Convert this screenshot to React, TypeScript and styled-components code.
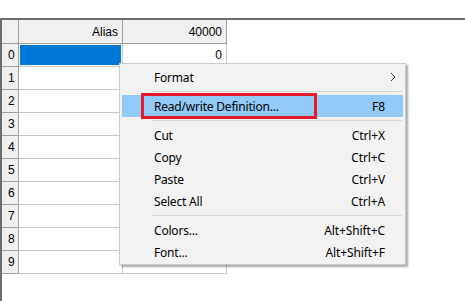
import { Fragment } from "react";
import styled, { createGlobalStyle } from "styled-components";

const GlobalStyle = createGlobalStyle`
  html, body {
    margin: 0;
    padding: 0;
    background: #ffffff;
    width: 465px;
    height: 301px;
    overflow: hidden;
  }
  body {
    font-family: "Noto Sans", "Liberation Sans", Arial, sans-serif;
    font-size: 12px;
    color: #000000;
  }
`;

const Frame = styled.div`
  position: relative;
  margin-top: 18px;
  height: 283px;
  border-top: 2px solid #6e6e6e;
  border-left: 2px solid #6e6e6e;
  box-sizing: border-box;
  background: #ffffff;
`;

const Grid = styled.div`
  display: grid;
  grid-template-columns: 17px 104px 104px;
  grid-auto-rows: 23px;
  grid-template-rows: 24px;
  font-family: "Liberation Sans", Arial, sans-serif;
  font-size: 12px;
`;

const Cell = styled.div<{ $head?: boolean; $align?: string }>`
  box-sizing: border-box;
  display: flex;
  align-items: center;
  justify-content: ${({ $align }) => $align || "flex-end"};
  padding: ${({ $align }) => ($align === "flex-start" ? "0 0 0 6px" : "0 4px 0 0")};
  background: ${({ $head }) => ($head ? "#f0f0f0" : "#ffffff")};
  border-right: 1px solid ${({ $head }) => ($head ? "#a0a0a0" : "#c8c8c8")};
  border-bottom: 1px solid ${({ $head }) => ($head ? "#a0a0a0" : "#c8c8c8")};
  position: relative;
`;

const Selection = styled.div`
  position: absolute;
  inset: 1px;
  background: #0078d7;
`;

const Menu = styled.div`
  position: absolute;
  left: 117px;
  top: 43px;
  width: 287px;
  box-sizing: border-box;
  padding: 2px 1px 1px 1px;
  background: #f2f2f2;
  border: 1px solid #cccccc;
  box-shadow: 2px 2px 2px rgba(0, 0, 0, 0.35);
  font-family: "Noto Sans", "Liberation Sans", Arial, sans-serif;
  font-size: 12px;
`;

const Item = styled.div<{ $active?: boolean }>`
  display: flex;
  align-items: center;
  justify-content: space-between;
  height: 22px;
  margin: 0 1px;
  padding: 0 18px 0 32px;
  background: ${({ $active }) => ($active ? "#91c9f7" : "transparent")};
  white-space: nowrap;
`;

const Label = styled.span`
  letter-spacing: -0.2px;
`;

const Shortcut = styled.span`
  letter-spacing: -0.1px;
`;

const Arrow = styled.svg`
  margin-right: -11px;
`;

const Separator = styled.div`
  height: 7px;
  display: flex;
  align-items: center;
  padding-left: 30px;
  margin-right: 2px;
  &::after {
    content: "";
    flex: 1;
    height: 1px;
    background: #d7d7d7;
  }
`;

const Callout = styled.div`
  position: absolute;
  left: 21px;
  top: 29px;
  width: 176px;
  height: 26px;
  box-sizing: border-box;
  border: 3px solid #e5192a;
`;

const rows = Array.from({ length: 10 }, (_, i) => i);

export default function App() {
  return (
    <>
      <GlobalStyle />
      <Frame>
        <Grid>
          <Cell $head />
          <Cell $head>Alias</Cell>
          <Cell $head>40000</Cell>
          {rows.map((r) => (
            <Fragment key={r}>
              <Cell $head $align="flex-start">
                {r}
              </Cell>
              <Cell>{r === 0 && <Selection />}</Cell>
              <Cell>{r === 0 ? "0" : ""}</Cell>
            </Fragment>
          ))}
        </Grid>
        <Menu>
          <Item>
            <Label>Format</Label>
            <Arrow width="6" height="10" viewBox="0 0 6 10">
              <path d="M1 1 L5 5 L1 9" fill="none" stroke="#333" strokeWidth="1" />
            </Arrow>
          </Item>
          <Separator />
          <Item $active>
            <Label>Read/write Definition...</Label>
            <Shortcut>F8</Shortcut>
          </Item>
          <Separator />
          <Item>
            <Label>Cut</Label>
            <Shortcut>Ctrl+X</Shortcut>
          </Item>
          <Item>
            <Label>Copy</Label>
            <Shortcut>Ctrl+C</Shortcut>
          </Item>
          <Item>
            <Label>Paste</Label>
            <Shortcut>Ctrl+V</Shortcut>
          </Item>
          <Item>
            <Label>Select All</Label>
            <Shortcut>Ctrl+A</Shortcut>
          </Item>
          <Separator />
          <Item>
            <Label>Colors...</Label>
            <Shortcut>Alt+Shift+C</Shortcut>
          </Item>
          <Item>
            <Label>Font...</Label>
            <Shortcut>Alt+Shift+F</Shortcut>
          </Item>
          <Callout />
        </Menu>
      </Frame>
    </>
  );
}
